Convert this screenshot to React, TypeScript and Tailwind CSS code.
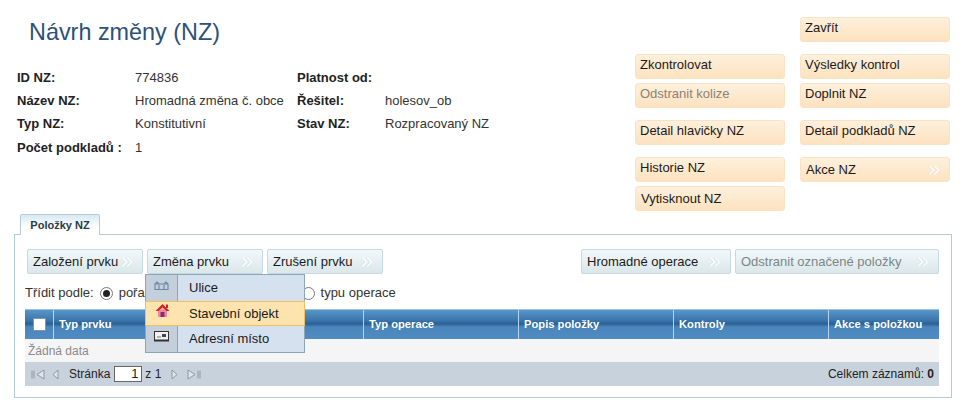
const FONT = "font-['Liberation_Sans',Arial,sans-serif]";

function Chevrons({ className = "" }: { className?: string }) {
  return (
    <svg width="13" height="10" viewBox="0 0 13 10" fill="none" className={`shrink-0 ${className}`} aria-hidden="true">
      <path d="M2 1l4 4-4 4M7 1l4 4-4 4" stroke="#ffffff" strokeWidth="2" opacity="0.8" />
      <path d="M1 1l4 4-4 4M6 1l4 4-4 4" stroke="#d5e5e8" strokeWidth="1" />
    </svg>
  );
}

/* oranzova tlacitka vpravo nahore */
function OrangeButton({ label, disabled, arrow, down }: { label: string; disabled?: boolean; arrow?: boolean; down?: boolean }) {
  return (
    <div
      className={`flex h-[25px] w-[150px] shrink-0 justify-between rounded-[3px] border border-[#fbe2c2] bg-gradient-to-b from-[#fdf0dc] to-[#fde2bf] pr-[9px] text-[13px] leading-[15px] ${down ? "pl-[5px] pt-[4px]" : "pl-[4px] pt-[2px]"} ${disabled ? "text-[#8a8278]" : "text-[#1a1a1a]"}`}
    >
      <span>{label}</span>
      {arrow && <Chevrons className="mt-[3px]" />}
    </div>
  );
}

/* modra tlacitka v toolbaru */
function BlueButton({ label, width, disabled }: { label: string; width: string; disabled?: boolean }) {
  return (
    <div
      className={`flex h-[25px] shrink-0 items-center justify-between rounded-[2px] border border-[#c5d9e0] bg-gradient-to-b from-[#f1f8fa] to-[#dbe7ea] pl-[5px] pr-[9px] text-[13px] ${width} ${disabled ? "text-[#7d8588]" : "text-[#1a1a1a]"}`}
    >
      <span className="whitespace-nowrap">{label}</span>
      <Chevrons />
    </div>
  );
}

function Info({ children, bold }: { children?: React.ReactNode; bold?: boolean }) {
  return <div className={`whitespace-nowrap ${bold ? "font-bold text-[#222222]" : "text-[#333333]"}`}>{children}</div>;
}

function Radio({ checked }: { checked?: boolean }) {
  return (
    <span className="flex h-[13px] w-[13px] shrink-0 items-center justify-center rounded-full border border-[#7a7a7a] bg-white">
      {checked && <span className="h-[7px] w-[7px] rounded-full bg-[#222222]" />}
    </span>
  );
}

function HeaderCell({ label }: { label: string }) {
  return <div className="flex items-center border-l border-[#b4d3ec] pl-[5px]">{label}</div>;
}

function PagerIcon({ d, w }: { d: string; w: number }) {
  return (
    <svg width={w} height="11" viewBox={`0 0 ${w} 11`} fill="none" className="shrink-0" aria-hidden="true">
      <path d={d} stroke="#8e99a5" strokeWidth="1" fill="#dfe5ea" />
    </svg>
  );
}

function DropdownMenu() {
  const rowText = "flex flex-1 items-center pl-[11px]";
  return (
    <div className="absolute left-[130px] top-[39px] z-10 flex h-[79px] w-[160px] flex-col border border-[#8ba6b8] bg-[#d5e1ee] text-[13px] text-[#1a1a1a]">
      <div className="flex h-[26px]">
        <div className="flex w-[32px] justify-center border-r border-[#8ba6b8] bg-[#c3cfdb] pt-[5px]">
          <svg width="15" height="11" viewBox="0 0 15 11" fill="none" aria-hidden="true">
            <path d="M1 9.5V4l2-2 2 2h5l2-2 2 2v5.5zM5 9.5V5M10 9.5V5M1 4h4M10 4h4" stroke="#6b87a6" strokeWidth="1.1" />
          </svg>
        </div>
        <div className={rowText}>Ulice</div>
      </div>
      <div className="-mx-px flex h-[25px] border border-[#f0c060] bg-[#fde3ad]">
        <div className="flex w-[32px] justify-center pt-[1px]">
          <svg width="15" height="15" viewBox="0 0 15 15" aria-hidden="true">
            <path d="M3 6.5h9V14H3z" fill="#ea8c98" />
            <rect x="5.5" y="9" width="4" height="5" fill="#8c2a78" />
            <path d="M7.5 1L0.5 8h3l4-3.5 4 3.5h3z" fill="#d8232a" />
            <rect x="11" y="1.5" width="2" height="3.5" fill="#d8232a" />
          </svg>
        </div>
        <div className={rowText}>Stavební objekt</div>
      </div>
      <div className="flex flex-1">
        <div className="flex w-[32px] justify-center border-r border-[#8ba6b8] bg-[#c3cfdb] pt-[5px]">
          <svg width="15" height="11" viewBox="0 0 15 11" aria-hidden="true">
            <rect x="0.5" y="0.5" width="14" height="9" fill="#eef2f5" stroke="#333333" />
            <rect x="0" y="8.5" width="15" height="2" fill="#333333" />
            <rect x="8" y="3" width="4" height="3" fill="#444444" />
            <path d="M3 6h4" stroke="#777777" />
          </svg>
        </div>
        <div className={rowText}>Adresní místo</div>
      </div>
    </div>
  );
}

export default function App() {
  return (
    <div className={`${FONT} h-[409px] w-[963px] overflow-hidden bg-white text-[12px]`}>
      {/* Horni cast */}
      <div className="flex h-[214px]">
        <div className="w-[635px] pl-[17px]">
          <h1 className="ml-[12px] mt-[18px] text-[23.4px] font-normal leading-[28px] text-[#2d5177]">Návrh změny (NZ)</h1>
          <div className="mt-[20px] grid grid-cols-[118px_162px_88px_1fr] grid-rows-[23px_23px_24px_23px] items-center text-[13px]">
            <Info bold>ID NZ:</Info>
            <Info>774836</Info>
            <Info bold>Platnost od:</Info>
            <Info />
            <Info bold>Název NZ:</Info>
            <Info>Hromadná změna č. obce</Info>
            <Info bold>Řešitel:</Info>
            <Info>holesov_ob</Info>
            <Info bold>Typ NZ:</Info>
            <Info>Konstitutivní</Info>
            <Info bold>Stav NZ:</Info>
            <Info>Rozpracovaný NZ</Info>
            <Info bold>Počet podkladů :</Info>
            <Info>1</Info>
          </div>
        </div>
        <div className="flex w-[150px] flex-col pt-[54px]">
          <OrangeButton label="Zkontrolovat" />
          <div className="mt-[4px]"><OrangeButton label="Odstranit kolize" disabled /></div>
          <div className="mt-[12px]"><OrangeButton label="Detail hlavičky NZ" /></div>
          <div className="mt-[12px]"><OrangeButton label="Historie NZ" /></div>
          <div className="mt-[4px]"><OrangeButton label="Vytisknout NZ" down /></div>
        </div>
        <div className="ml-[15px] flex w-[150px] flex-col pt-[17px]">
          <OrangeButton label="Zavřít" />
          <div className="mt-[12px]"><OrangeButton label="Výsledky kontrol" /></div>
          <div className="mt-[4px]"><OrangeButton label="Doplnit NZ" /></div>
          <div className="mt-[12px]"><OrangeButton label="Detail podkladů NZ" /></div>
          <div className="mt-[12px]"><OrangeButton label="Akce NZ" arrow down /></div>
        </div>
      </div>

      {/* Zalozka */}
      <div className="ml-[14px] w-[938px]">
        <div className="relative z-[1] -mb-px ml-[6px] flex h-[21px] w-[80px] items-center justify-center rounded-t-[2px] border border-b-0 border-[#b5ccd8] bg-gradient-to-b from-[#d5e8f3] to-white to-60% text-[11px] font-bold text-[#2a3a46]">
          Položky NZ
        </div>
        <div className="relative h-[164px] border border-[#b5ccd8] bg-white pl-[10px] pr-[12px] pt-[14px]">
          <div className="flex gap-[4px] pl-[2px]">
            <BlueButton label="Založení prvku" width="w-[116px]" />
            <BlueButton label="Změna prvku" width="w-[116px]" />
            <BlueButton label="Zrušení prvku" width="w-[116px]" />
            <div className="ml-auto flex gap-[4px]">
              <BlueButton label="Hromadné operace" width="w-[150px]" />
              <BlueButton label="Odstranit označené položky" width="w-[204px]" disabled />
            </div>
          </div>
          <div className="mt-[10px] flex h-[18px] items-center text-[13px] text-[#333333]">
            <span>Třídit podle:</span>
            <span className="ml-[6px]"><Radio checked /></span>
            <span className="ml-[6px]">pořadí</span>
            <span className="ml-[146px]"><Radio /></span>
            <span className="ml-[6px]">typu operace</span>
          </div>

          {/* Tabulka */}
          <div className="mt-[7px] w-[914px]">
            <div className="grid h-[30px] grid-cols-[28px_310px_155px_155px_155px_1fr] border-t border-[#9cc2e0] bg-[linear-gradient(to_bottom,#5a95c8_0%,#3b77ad_35%,#2a5f94_48%,#4a86bb_58%,#4f8cc2_100%)] text-[11.2px] font-bold text-white">
              <div className="flex items-center justify-center">
                <span className="h-[13px] w-[13px] border border-[#7f97ab] bg-white" />
              </div>
              <HeaderCell label="Typ prvku" />
              <HeaderCell label="Typ operace" />
              <HeaderCell label="Popis položky" />
              <HeaderCell label="Kontroly" />
              <HeaderCell label="Akce s položkou" />
            </div>
            <div className="flex h-[23px] items-center bg-[#f5f5f5] pl-[3px] text-[12px] text-[#8a8a8a]">Žádná data</div>
            <div className="flex h-[24px] items-center bg-[#c8d2dd] pl-[6px] pr-[5px] text-[12px] text-[#222222]">
              <PagerIcon w={14} d="M1 1.5v8M3 1.5v8M13 1v9L6 5.5z" />
              <span className="ml-[7px]"><PagerIcon w={7} d="M6 1v9L1 5.5z" /></span>
              <span className="ml-[10px]">Stránka</span>
              <span className="ml-[4px] flex h-[16px] w-[28px] items-center justify-end border border-[#666666] bg-white pr-[3px] text-[13px]">1</span>
              <span className="ml-[3px]">z 1</span>
              <span className="ml-[10px]"><PagerIcon w={7} d="M1 1v9l5-4.5z" /></span>
              <span className="ml-[9px]"><PagerIcon w={14} d="M1 1v9l7-4.5zM11 1.5v8M13 1.5v8" /></span>
              <span className="ml-auto">Celkem záznamů: <b>0</b></span>
            </div>
          </div>

          <DropdownMenu />
        </div>
      </div>
    </div>
  );
}
